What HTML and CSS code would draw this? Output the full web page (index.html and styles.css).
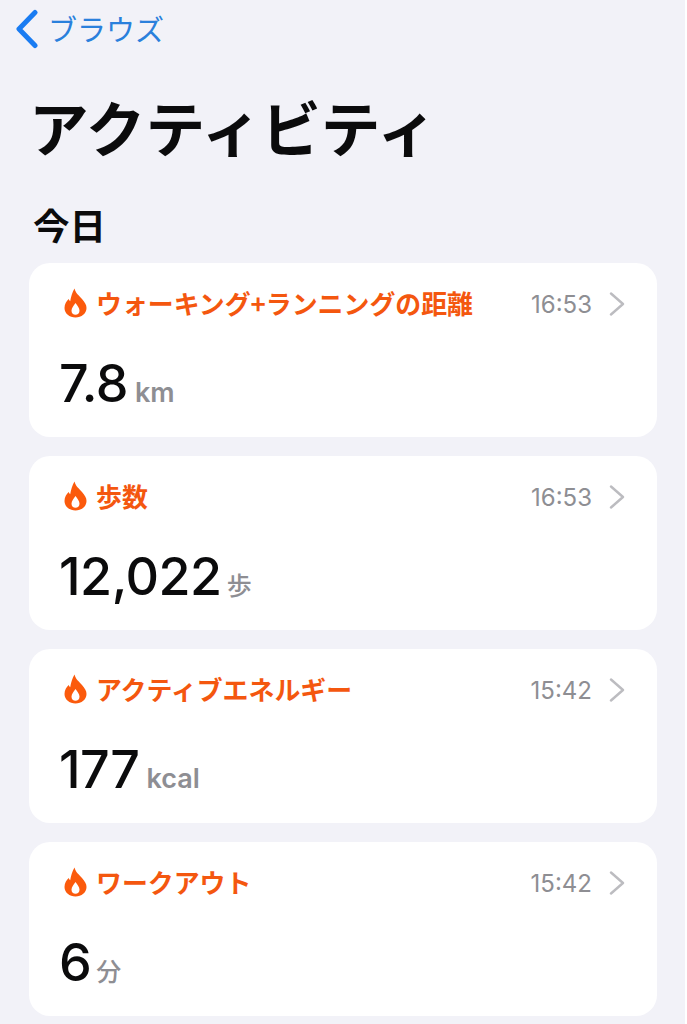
FILE: index.html
```html
<!DOCTYPE html>
<html lang="ja">

<head>
    <meta charset="UTF-8">
    <meta name="viewport" content="width=device-width, initial-scale=1.0">
    <title>アクティビティ</title>
    <link rel="stylesheet" href="styles.css">
</head>

<body>
    <svg class="defs" width="0" height="0">
        <symbol id="flame" viewBox="0 0 23 30">
            <path fill-rule="evenodd" fill="#fb5a0c" d="M10.5 0.5 C11.5 5 15 7.5 18 11 C21 14.5 22.5 17 22.5 20 C22.5 25.5 17.5 29.5 11.5 29.5 C5.5 29.5 0.5 25.5 0.5 20 C0.5 16 2.5 13 4.7 11 C5 12 5.5 12.7 6.2 13.2 C6.8 9 8.5 4 10.5 0.5 Z M11.5 15 C9.5 18 7.5 20 7.5 22.8 C7.5 25.3 9.3 26.8 11.5 26.8 C13.7 26.8 15.5 25.3 15.5 22.8 C15.5 20 13.5 18 11.5 15 Z" />
        </symbol>
        <symbol id="chevron" viewBox="0 0 16 24">
            <path d="M2 1.5 L14 12 L2 22.5" fill="none" stroke="#bcbcc0" stroke-width="2.4" stroke-linecap="round" stroke-linejoin="round" />
        </symbol>
    </svg>

    <div class="page">
        <div class="nav">
            <svg class="back-icon" width="24" height="40" viewBox="0 0 24 40">
                <path d="M20 3.5 L4 20 L20 36.5" fill="none" stroke="#1a7cf2" stroke-width="5" stroke-linecap="round" stroke-linejoin="round" />
            </svg>
            <span class="back-text">ブラウズ</span>
        </div>

        <h1 class="title">アクティビティ</h1>
        <h2 class="section">今日</h2>

        <div class="list">
            <div class="card">
                <div class="card-head">
                    <svg class="flame" width="23" height="30"><use href="#flame" /></svg>
                    <span class="card-title">ウォーキング+ランニングの距離</span>
                    <span class="time">16:53</span>
                    <svg class="chevron" width="16" height="24"><use href="#chevron" /></svg>
                </div>
                <div class="card-value"><span class="num">7.8</span><span class="unit">km</span></div>
            </div>

            <div class="card">
                <div class="card-head">
                    <svg class="flame" width="23" height="30"><use href="#flame" /></svg>
                    <span class="card-title">歩数</span>
                    <span class="time">16:53</span>
                    <svg class="chevron" width="16" height="24"><use href="#chevron" /></svg>
                </div>
                <div class="card-value"><span class="num">12,022</span><span class="unit unit-ja">歩</span></div>
            </div>

            <div class="card">
                <div class="card-head">
                    <svg class="flame" width="23" height="30"><use href="#flame" /></svg>
                    <span class="card-title">アクティブエネルギー</span>
                    <span class="time">15:42</span>
                    <svg class="chevron" width="16" height="24"><use href="#chevron" /></svg>
                </div>
                <div class="card-value"><span class="num">177</span><span class="unit">kcal</span></div>
            </div>

            <div class="card">
                <div class="card-head">
                    <svg class="flame" width="23" height="30"><use href="#flame" /></svg>
                    <span class="card-title">ワークアウト</span>
                    <span class="time">15:42</span>
                    <svg class="chevron" width="16" height="24"><use href="#chevron" /></svg>
                </div>
                <div class="card-value"><span class="num">6</span><span class="unit unit-ja">分</span></div>
            </div>
        </div>
    </div>
</body>

</html>
```

FILE: styles.css
```css
body {
    margin: 0;
    height: 1024px;
    overflow: hidden;
    background: #fff;
    font-family: Inter, "Noto Sans CJK JP", sans-serif;
    color: #0b0b0c;
}

.defs {
    display: block;
}

.page {
    width: 685px;
    height: 1024px;
    background: #f2f2f8;
    overflow: hidden;
}

.nav {
    display: flex;
    align-items: center;
    height: 40px;
    padding: 9px 0 0 15px;
}

.back-icon {
    margin-right: 9px;
}

.back-text {
    margin-top: -3px;
    font-family: "Noto Sans CJK JP", sans-serif;
    font-size: 29px;
    line-height: 40px;
    color: #2a80dc;
}

.title {
    margin: 37px 0 0 29px;
    font-family: "Noto Sans CJK JP", sans-serif;
    font-size: 59.7px;
    line-height: 80px;
    font-weight: 700;
}

.section {
    margin: 34px 0 0 33px;
    font-family: "Noto Sans CJK JP", sans-serif;
    font-size: 36.5px;
    line-height: 50px;
    font-weight: 700;
}

.list {
    display: flex;
    flex-direction: column;
    gap: 19px;
    margin: 13px 28px 0 29px;
}

.card {
    height: 174px;
    padding: 22px 32px 0 35px;
    box-sizing: border-box;
    background: #fff;
    border-radius: 21px;
}

.card-head {
    display: flex;
    align-items: center;
    height: 38px;
}

.flame {
    flex: none;
    margin-right: 9px;
    margin-top: -2px;
}

.card-title {
    flex: 1;
    margin-bottom: 3px;
    font-family: "Noto Sans CJK JP", sans-serif;
    font-size: 25.9px;
    line-height: 38px;
    font-weight: 700;
    color: #f4570f;
}

.time {
    font-size: 24px;
    color: #8e8e93;
}

.chevron {
    margin-left: 17px;
}

.card-value {
    display: flex;
    align-items: baseline;
    margin-top: 26px;
    margin-left: -5px;
    line-height: 70px;
}

.num {
    font-size: 52px;
    font-weight: 500;
    letter-spacing: -0.5px;
}

.unit {
    margin-left: 7px;
    font-size: 27px;
    font-weight: 600;
    color: #8e8e93;
}

.unit-ja {
    margin-left: 5px;
    font-size: 25px;
    font-weight: 500;
}
```
